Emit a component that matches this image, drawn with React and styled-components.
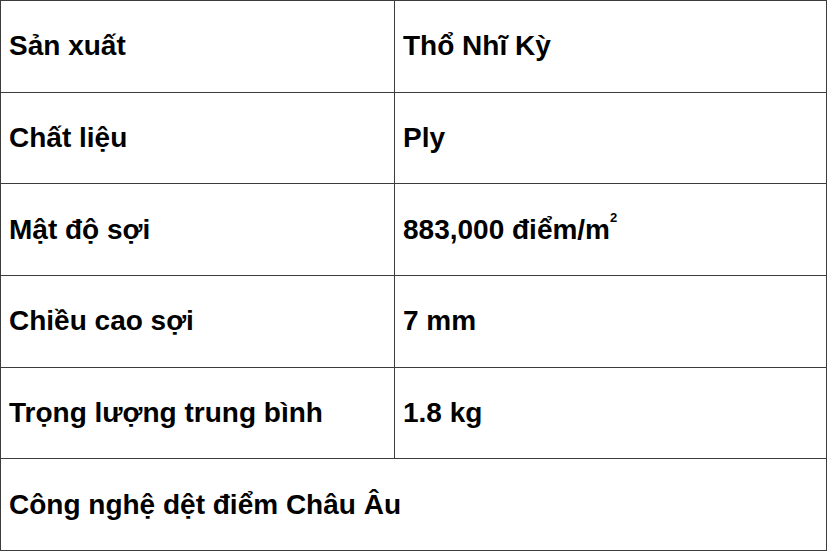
import React from "react";
import styled, { createGlobalStyle } from "styled-components";

const GlobalStyle = createGlobalStyle`
  html, body {
    margin: 0;
    padding: 0;
    background: #ffffff;
  }
`;

const specs = [
  { label: "Sản xuất", value: "Thổ Nhĩ Kỳ" },
  { label: "Chất liệu", value: "Ply" },
  { label: "Mật độ sợi", value: "883,000 điểm/m", sup: "2" },
  { label: "Chiều cao sợi", value: "7 mm" },
  { label: "Trọng lượng trung bình", value: "1.8 kg" },
];

const SpecTable = () => (
  <Table>
    <tbody>
      {specs.map((row, index) => (
        <Row key={index}>
          <LabelCell>{row.label}</LabelCell>
          <ValueCell>
            {row.value}
            {row.sup && <Sup>{row.sup}</Sup>}
          </ValueCell>
        </Row>
      ))}
      <Row>
        <LabelCell colSpan={2}>Công nghệ dệt điểm Châu Âu</LabelCell>
      </Row>
    </tbody>
  </Table>
);

export default function App() {
  return (
    <>
      <GlobalStyle />
      <SpecTable />
    </>
  );
}

const Table = styled.table`
  width: 827px;
  height: 551px;
  border-collapse: collapse;
  table-layout: fixed;
  font-family: "Liberation Sans", Arial, sans-serif;
  font-weight: bold;
  font-size: 28px;
  color: #000;
`;

const Row = styled.tr`
  height: 91.6px;
`;

const LabelCell = styled.td`
  border: 1px solid #3c3c3c;
  padding: 0 0 0 8px;
  vertical-align: middle;
  width: 385px;
`;

const ValueCell = styled(LabelCell)`
  width: auto;
`;

const Sup = styled.sup`
  font-size: 13px;
  vertical-align: top;
  position: relative;
  top: -4px;
`;
